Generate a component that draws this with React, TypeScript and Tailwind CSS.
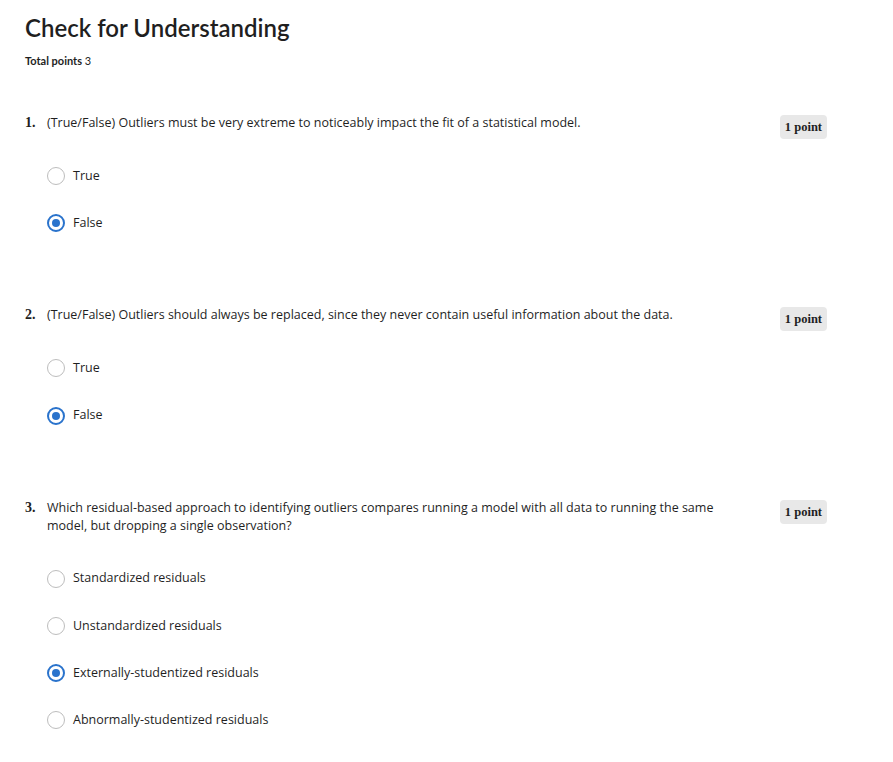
const questions = [
  {
    text: "(True/False) Outliers must be very extreme to noticeably impact the fit of a statistical model.",
    options: ["True", "False"],
    selected: 1,
  },
  {
    text: "(True/False) Outliers should always be replaced, since they never contain useful information about the data.",
    options: ["True", "False"],
    selected: 1,
  },
  {
    text: "Which residual-based approach to identifying outliers compares running a model with all data to running the same model, but dropping a single observation?",
    options: [
      "Standardized residuals",
      "Unstandardized residuals",
      "Externally-studentized residuals",
      "Abnormally-studentized residuals",
    ],
    selected: 2,
  },
];

const Radio = ({ checked }: { checked: boolean }) =>
  checked ? (
    <span className="flex h-[18px] w-[18px] items-center justify-center rounded-full border-2 border-[#2a73cc]">
      <span className="h-[8px] w-[8px] rounded-full bg-[#2a73cc]" />
    </span>
  ) : (
    <span className="h-[18px] w-[18px] rounded-full border-[1.5px] border-[#bdbdbd]" />
  );

const App = () => {
  return (
    <div className="min-h-screen bg-white pl-[25px] pt-[12px] text-[#1f1f1f] [font-family:'Open_Sans',sans-serif]">
      <h1 className="text-[24px] leading-[32px] font-semibold [font-family:Lato,sans-serif]">
        Check for Understanding
      </h1>
      <div className="mt-[8px] text-[11px] leading-[18px] [font-family:Lato,sans-serif]">
        <span className="font-bold">Total points</span> 3
      </div>

      <div className="mt-[44px] flex flex-col gap-[74px]">
        {questions.map((q, i) => (
          <div key={i} className="flex w-[802px] justify-between">
            <div>
              <div className="flex text-[12.5px] leading-[18px]">
                <span className="w-[22px] text-[14px] font-bold [font-family:'Liberation_Serif',serif]">
                  {i + 1}.
                </span>
                <p className="w-[680px]">{q.text}</p>
              </div>
              <div className="mt-[35px] ml-[22px] flex flex-col gap-[29.3px]">
                {q.options.map((o, j) => (
                  <label key={j} className="flex h-[18px] items-center gap-[8px] text-[12.5px]">
                    <Radio checked={j === q.selected} />
                    <span>{o}</span>
                  </label>
                ))}
              </div>
            </div>
            <div className="mt-[1px] h-[24px] rounded-[4px] bg-[#e8e8e8] px-[5px] text-[12.5px] leading-[24px] font-bold [font-family:'Liberation_Serif',serif]">
              1 point
            </div>
          </div>
        ))}
      </div>
    </div>
  );
};

export default App;
